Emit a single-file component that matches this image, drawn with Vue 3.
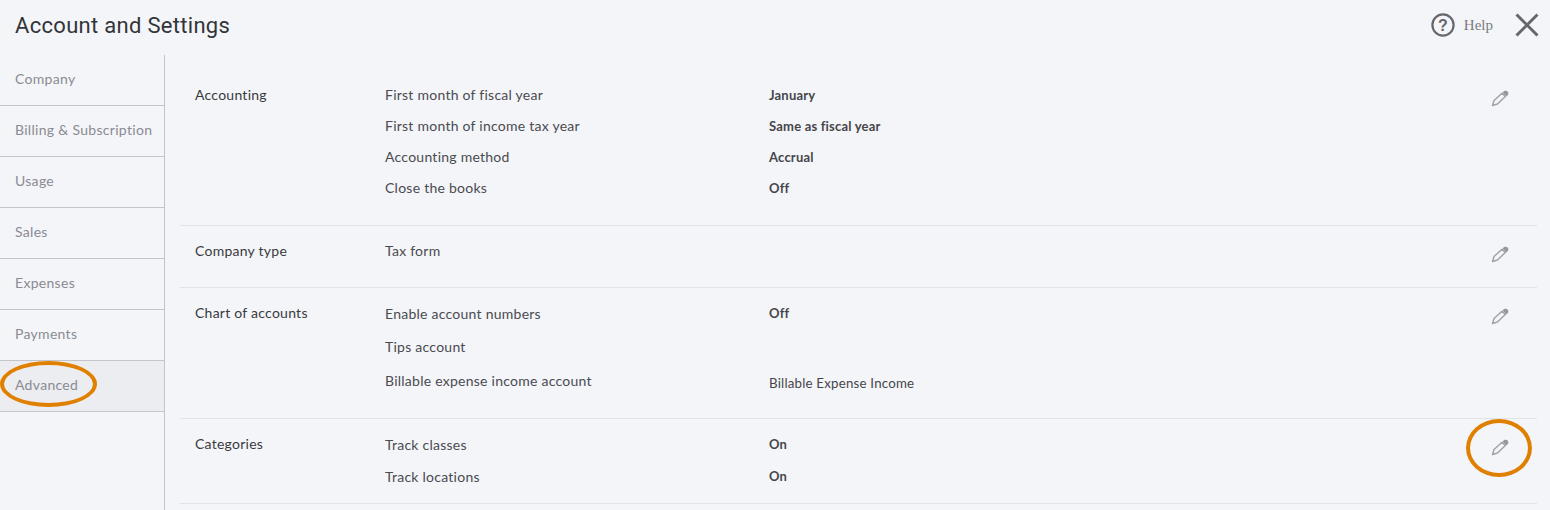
<script setup>
const navItems = ["Company", "Billing & Subscription", "Usage", "Sales", "Expenses", "Payments", "Advanced"];
const sections = [
  {
    title: "Accounting",
    cls: "accounting",
    rows: [
      { label: "First month of fiscal year", value: "January" },
      { label: "First month of income tax year", value: "Same as fiscal year" },
      { label: "Accounting method", value: "Accrual" },
      { label: "Close the books", value: "Off" },
    ],
  },
  { title: "Company type", cls: "type", rows: [{ label: "Tax form", value: "" }] },
  {
    title: "Chart of accounts",
    cls: "chart",
    rows: [
      { label: "Enable account numbers", value: "Off" },
      { label: "Tips account", value: "" },
      { label: "Billable expense income account", value: "Billable Expense Income", plain: true },
    ],
  },
  {
    title: "Categories",
    cls: "categories",
    circled: true,
    rows: [
      { label: "Track classes", value: "On" },
      { label: "Track locations", value: "On" },
    ],
  },
];
</script>

<template>
  <div class="page">
    <header class="top">
      <h1>Account and Settings</h1>
      <div class="actions">
        <svg class="help-icon" width="24" height="24" viewBox="0 0 24 24">
          <circle cx="12" cy="12" r="10.6" fill="none" stroke="#66676c" stroke-width="2.2" />
          <text x="12" y="17.5" text-anchor="middle" class="q">?</text>
        </svg>
        <span class="help">Help</span>
        <svg class="close" width="24" height="24" viewBox="0 0 24 24">
          <path d="M1.5 1.5L22.5 22.5M22.5 1.5L1.5 22.5" stroke="#66676c" stroke-width="3" fill="none" />
        </svg>
      </div>
    </header>

    <div class="body">
      <nav class="side">
        <div
          v-for="item in navItems"
          :key="item"
          class="nav-item"
          :class="{ active: item === 'Advanced' }"
        >
          {{ item }}
          <span v-if="item === 'Advanced'" class="ring nav-ring"></span>
        </div>
      </nav>

      <main class="content">
        <section v-for="sec in sections" :key="sec.title" class="sec" :class="sec.cls">
          <div class="sec-title">{{ sec.title }}</div>
          <div class="rows">
            <div v-for="row in sec.rows" :key="row.label" class="row">
              <span class="label">{{ row.label }}</span>
              <span class="value" :class="{ plain: row.plain }">{{ row.value }}</span>
            </div>
          </div>
          <div class="edit">
            <svg width="18" height="18" viewBox="0 0 18 18">
              <path d="M1.5 16.5L3 11.5L11 4.2L14.3 7.5L6.5 15Z" fill="none" stroke="#a2a3a8" stroke-width="1.5" stroke-linejoin="round" />
              <path d="M11.6 3.4C13 1.4 15.3 1.2 16.6 2.5C17.9 3.8 17.6 6 15.2 7.4Z" fill="#96979c" />
            </svg>
            <span v-if="sec.circled" class="ring edit-ring"></span>
          </div>
        </section>
      </main>
    </div>
  </div>
</template>

<style>
html,
body {
  margin: 0;
  background: #f4f5f9;
  overflow: hidden;
}
</style>

<style scoped>
.page {
  width: 1550px;
  height: 510px;
  background: #f4f5f9;
  font-family: Lato, "Noto Sans", sans-serif;
  color: #393a3d;
  overflow: hidden;
}
.top {
  height: 55px;
  display: flex;
  align-items: center;
  justify-content: space-between;
  padding: 0 11px 5px 15px;
  box-sizing: border-box;
}
h1 {
  margin: 0;
  font-family: Roboto, sans-serif;
  font-size: 22px;
  font-weight: 400;
  letter-spacing: 0.3px;
  color: #333438;
}
.actions {
  display: flex;
  align-items: center;
  margin-top: -1px;
}
.help-icon {
  display: block;
  margin-left: -1px;
}
.q {
  font-family: "Liberation Sans", sans-serif;
  font-size: 16px;
  font-weight: 700;
  fill: #66676c;
}
.help {
  font-family: "Liberation Serif", serif;
  font-size: 15px;
  color: #7a7b80;
  margin: 1px 22px 0 9px;
}
.close {
  display: block;
}
.body {
  display: flex;
  height: 455px;
}
.side {
  width: 165px;
  flex: none;
  box-sizing: border-box;
  border-right: 1px solid #c4c5c9;
}
.nav-item {
  position: relative;
  height: 51px;
  box-sizing: border-box;
  border-bottom: 1px solid #c4c5c9;
  padding: 0 0 4px 15px;
  display: flex;
  align-items: center;
  font-size: 14px;
  letter-spacing: 0.3px;
  color: #8a8b91;
}
.nav-item.active {
  background: #ecedf1;
}
.ring {
  position: absolute;
  border: 4px solid #e08000;
  border-radius: 50%;
  box-sizing: border-box;
}
.nav-ring {
  left: 0;
  top: 0;
  width: 97px;
  height: 46px;
}
.content {
  flex: 1;
  padding: 0 13px 0 15px;
}
.sec {
  display: flex;
  align-items: flex-start;
  box-sizing: border-box;
  border-bottom: 1px solid #e2e3e7;
  position: relative;
  padding-top: 30px;
}
.sec.accounting {
  height: 171px;
}
.sec.type {
  height: 62px;
  padding-top: 15px;
}
.sec.chart {
  height: 131px;
  padding-top: 15px;
}
.sec.categories {
  height: 85px;
  padding-top: 15px;
}
.sec-title {
  width: 205px;
  flex: none;
  padding-left: 15px;
  box-sizing: border-box;
  font-size: 14px;
  line-height: 20px;
  letter-spacing: 0.25px;
  color: #393a3d;
}
.rows {
  flex: 1;
  display: flex;
  flex-direction: column;
  gap: 11px;
}
.chart .rows {
  gap: 13px;
  margin-top: 1px;
}
.chart .row:last-child {
  margin-top: 1px;
}
.categories .rows {
  gap: 12px;
  margin-top: 1px;
}
.row {
  display: flex;
  height: 20px;
  line-height: 20px;
  font-size: 14px;
  letter-spacing: 0.25px;
}
.label {
  width: 384px;
  flex: none;
  color: #4a4b50;
}
.value {
  font-size: 13px;
  letter-spacing: 0.2px;
  font-weight: 700;
  color: #45464a;
}
.chart .value,
.categories .value {
  margin-top: -1px;
}
.chart .value.plain {
  font-size: 13.3px;
  font-weight: 400;
  margin-top: 2px;
}
.edit {
  position: relative;
  width: 40px;
  margin-right: 17px;
  display: flex;
  justify-content: center;
  padding-top: 4px;
}
.edit-ring {
  left: -14px;
  top: -15px;
  width: 66px;
  height: 58px;
}
</style>
